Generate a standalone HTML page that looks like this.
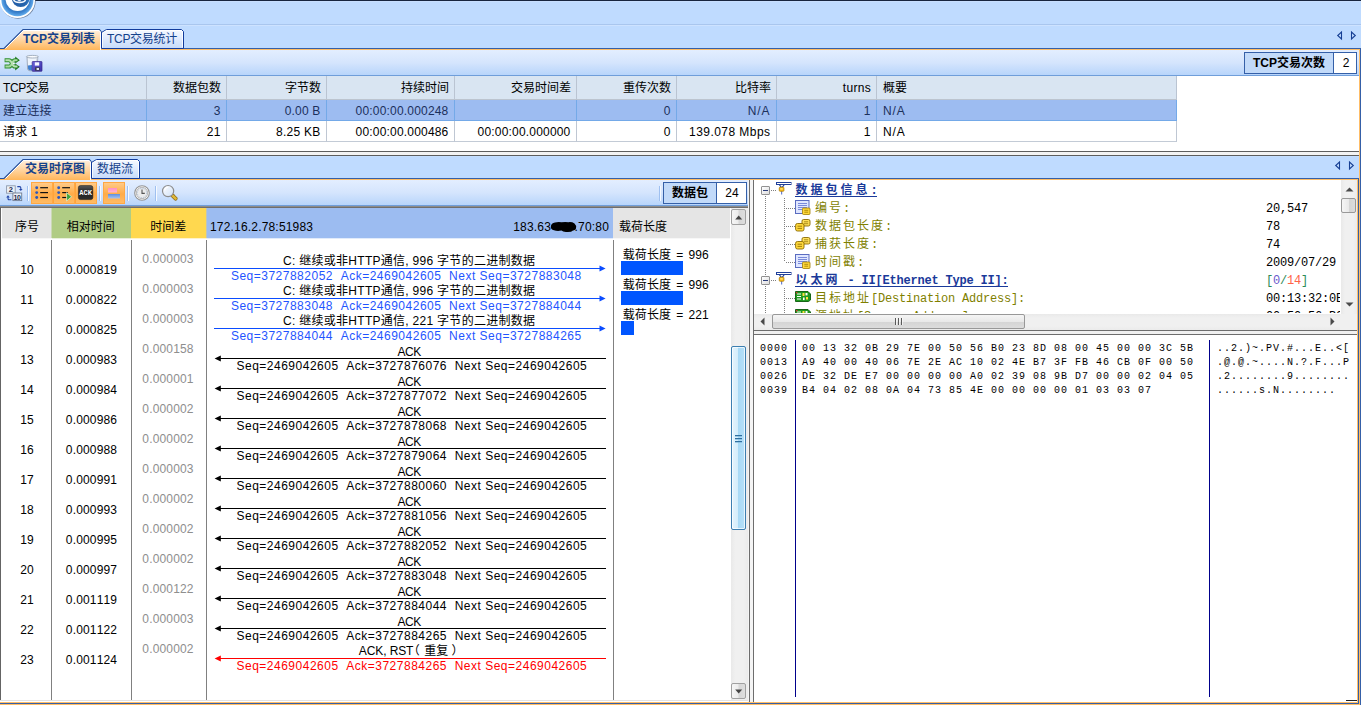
<!DOCTYPE html>
<html lang="zh-CN"><head><meta charset="utf-8"><title>TCP交易列表</title>
<style>
*{box-sizing:border-box;margin:0;padding:0}
html,body{width:1361px;height:705px;overflow:hidden}
body{background:#bfdbff;font-family:"Liberation Sans","Noto Sans CJK SC",sans-serif;font-size:12px;color:#000;position:relative;line-height:16px;font-kerning:none}
.a{position:absolute}
.t{position:absolute;white-space:pre;line-height:16px;height:16px}
.mono{font-family:"Liberation Mono","Noto Sans CJK SC",monospace;font-size:12px;letter-spacing:-0.2px}
.cj{letter-spacing:2px}
.cjb{letter-spacing:3px}
.hex{font-family:"Liberation Mono",monospace;font-size:10px;letter-spacing:1px}
.r{text-align:right}
.c{text-align:center}
svg{position:absolute;overflow:visible}
</style></head>
<body>
<div class="a" style="left:0px;top:0px;width:1361px;height:1px;background:#17253f;"></div>
<div class="a" style="left:0px;top:1px;width:1361px;height:1px;background:#c8dfff;"></div>
<div class="a" style="left:0px;top:24px;width:1361px;height:1px;background:#a9c6ee;"></div>
<div class="a" style="left:0px;top:25px;width:1361px;height:1px;background:#cde2ff;"></div>
<svg style="left:0;top:0" width="40" height="22" viewBox="0 0 40 22">
<defs>
<radialGradient id="lg1" gradientUnits="userSpaceOnUse" cx="17.4" cy="0" r="16"><stop offset="0" stop-color="#1f58a2"/><stop offset="0.55" stop-color="#2565ad"/><stop offset="0.8" stop-color="#3b83cf"/><stop offset="1" stop-color="#62abea"/></radialGradient>
</defs>
<circle cx="18" cy="1" r="17.7" fill="#566784" opacity="0.75"/>
<circle cx="17.4" cy="0.5" r="17.6" fill="#fff"/>
<circle cx="17.4" cy="0.2" r="16" fill="url(#lg1)"/>
<circle cx="17.6" cy="-1" r="12.1" fill="#fff"/>
<circle cx="20.7" cy="-1.9" r="8.9" fill="url(#lg1)"/>
<ellipse cx="19.6" cy="-0.6" rx="6.7" ry="3.9" fill="#f4f8fd"/>
<ellipse cx="19.6" cy="-1" rx="5.2" ry="2.6" fill="#2560a8"/>
<ellipse cx="19.3" cy="-0.2" rx="1.9" ry="1.1" fill="#f4f8fd"/>
</svg>
<div class="a" style="left:101px;top:48px;width:1260px;height:1px;background:#3560a8;"></div>
<div class="a" style="left:0px;top:49px;width:1360px;height:1px;background:#ffbd66;"></div>
<svg style="left:0;top:29px" width="187" height="21" viewBox="0 0 187 21">
<defs>
<linearGradient id="ta29" x1="0" y1="0" x2="0" y2="1"><stop offset="0" stop-color="#fff"/><stop offset="0.1" stop-color="#ffecd6"/><stop offset="0.5" stop-color="#ffd5a2"/><stop offset="1" stop-color="#ffb65a"/></linearGradient>
<linearGradient id="tb29" x1="0" y1="0" x2="0" y2="1"><stop offset="0" stop-color="#f6f9ff"/><stop offset="0.5" stop-color="#dfeafd"/><stop offset="1" stop-color="#c6dbfb"/></linearGradient>
</defs>
<path d="M101.5,19.5 V3.5 L106.5,0.5 H181.5 L183.5,2.5 V19.5 Z" fill="url(#tb29)" stroke="#123c9c" stroke-width="1"/>
<path d="M102.5,18.5 V4 L106.8,1.5 H181.2 L182.5,3 V18.5" fill="none" stroke="#fff" stroke-width="1" opacity="0.85"/>
<path d="M0,19.5 L4,19.5 L23,0.5 H99.5 L101.5,2.5 V21 H0 Z" fill="url(#ta29)"/>
<path d="M0,19.5 L4,19.5 L23,0.5 H99.5 L101.5,3" fill="none" stroke="#24509f" stroke-width="1.15"/>
<path d="M5.5,19.5 L23.5,1.5 H99 L100.5,3.2 V21" fill="none" stroke="#fff" stroke-width="1"/>
<path d="M101.5,3 V19.5" fill="none" stroke="#123c9c" stroke-width="1"/>
</svg>
<div class="t " style="left:23px;top:31px;font-weight:bold;color:#15428b">TCP交易列表</div>
<div class="t " style="left:107px;top:31px;color:#15428b;letter-spacing:-0.3px">TCP交易统计</div>
<svg style="left:1335px;top:31px" width="22" height="9" viewBox="0 0 22 9">
<path d="M6.5,1 V8 L2.7,4.5 Z" fill="none" stroke="#163f94" stroke-width="1.1" stroke-linejoin="miter"/>
<path d="M16.5,1 V8 L20.3,4.5 Z" fill="none" stroke="#163f94" stroke-width="1.1" stroke-linejoin="miter"/>
</svg>
<div class="a" style="left:1359px;top:49px;width:1px;height:656px;background:#ffbd66;"></div>
<div class="a" style="left:1360px;top:48px;width:1px;height:657px;background:#3560a8;"></div>
<div class="a" style="left:0px;top:50px;width:1359px;height:26px;background:linear-gradient(#e3eeff 0%,#d5e5fd 50%,#b8d5fb 100%);border-bottom:1px solid #6f9eda"></div>
<div class="a" style="left:1244px;top:52px;width:90px;height:22px;background:#c2daf9;border:1px solid #3560a8"></div>
<div class="a" style="left:1333px;top:52px;width:24px;height:22px;background:#fff;border:1px solid #3560a8"></div>
<div class="t c" style="left:1244px;top:55px;width:90px;font-weight:bold">TCP交易次数</div>
<div class="t c" style="left:1334px;top:55px;width:24px;">2</div>
<div class="a" style="left:0px;top:76px;width:1359px;height:75px;background:#fff;"></div>
<div class="a" style="left:0px;top:76px;width:1177px;height:23px;background:#d9e5f2;"></div>
<div class="a" style="left:0px;top:99px;width:1177px;height:1px;background:#bcc4cf;"></div>
<div class="a" style="left:0px;top:100px;width:1177px;height:20px;background:#9dbcf1;"></div>
<div class="a" style="left:0px;top:120px;width:1177px;height:1px;background:#74a9e8;"></div>
<div class="a" style="left:0px;top:141px;width:1177px;height:1px;background:#c3cbd6;"></div>
<div class="a" style="left:146px;top:76px;width:1px;height:23px;background:#bac4d2;"></div>
<div class="a" style="left:146px;top:100px;width:1px;height:21px;background:#74a9e8;"></div>
<div class="a" style="left:146px;top:121px;width:1px;height:21px;background:#bfc7d3;"></div>
<div class="a" style="left:226px;top:76px;width:1px;height:23px;background:#bac4d2;"></div>
<div class="a" style="left:226px;top:100px;width:1px;height:21px;background:#74a9e8;"></div>
<div class="a" style="left:226px;top:121px;width:1px;height:21px;background:#bfc7d3;"></div>
<div class="a" style="left:326px;top:76px;width:1px;height:23px;background:#bac4d2;"></div>
<div class="a" style="left:326px;top:100px;width:1px;height:21px;background:#74a9e8;"></div>
<div class="a" style="left:326px;top:121px;width:1px;height:21px;background:#bfc7d3;"></div>
<div class="a" style="left:454px;top:76px;width:1px;height:23px;background:#bac4d2;"></div>
<div class="a" style="left:454px;top:100px;width:1px;height:21px;background:#74a9e8;"></div>
<div class="a" style="left:454px;top:121px;width:1px;height:21px;background:#bfc7d3;"></div>
<div class="a" style="left:576px;top:76px;width:1px;height:23px;background:#bac4d2;"></div>
<div class="a" style="left:576px;top:100px;width:1px;height:21px;background:#74a9e8;"></div>
<div class="a" style="left:576px;top:121px;width:1px;height:21px;background:#bfc7d3;"></div>
<div class="a" style="left:676px;top:76px;width:1px;height:23px;background:#bac4d2;"></div>
<div class="a" style="left:676px;top:100px;width:1px;height:21px;background:#74a9e8;"></div>
<div class="a" style="left:676px;top:121px;width:1px;height:21px;background:#bfc7d3;"></div>
<div class="a" style="left:776px;top:76px;width:1px;height:23px;background:#bac4d2;"></div>
<div class="a" style="left:776px;top:100px;width:1px;height:21px;background:#74a9e8;"></div>
<div class="a" style="left:776px;top:121px;width:1px;height:21px;background:#bfc7d3;"></div>
<div class="a" style="left:876px;top:76px;width:1px;height:23px;background:#bac4d2;"></div>
<div class="a" style="left:876px;top:100px;width:1px;height:21px;background:#74a9e8;"></div>
<div class="a" style="left:876px;top:121px;width:1px;height:21px;background:#bfc7d3;"></div>
<div class="a" style="left:1176px;top:76px;width:1px;height:23px;background:#bac4d2;"></div>
<div class="a" style="left:1176px;top:100px;width:1px;height:21px;background:#74a9e8;"></div>
<div class="a" style="left:1176px;top:121px;width:1px;height:21px;background:#bfc7d3;"></div>
<div class="t " style="left:3px;top:80px;letter-spacing:-0.4px">TCP交易</div>
<div class="t " style="left:3px;top:103px;letter-spacing:0.19px;color:#1c305c;">建立连接</div>
<div class="t " style="left:3px;top:124px;letter-spacing:0.19px;">请求 1</div>
<div class="t r" style="left:147px;top:80px;width:74px;">数据包数</div>
<div class="t r" style="left:147px;top:103px;width:73.5px;letter-spacing:0.19px;color:#1c305c;">3</div>
<div class="t r" style="left:147px;top:124px;width:73.5px;letter-spacing:0.19px;">21</div>
<div class="t r" style="left:227px;top:80px;width:94px;">字节数</div>
<div class="t r" style="left:227px;top:103px;width:93.5px;letter-spacing:0.19px;color:#1c305c;">0.00 B</div>
<div class="t r" style="left:227px;top:124px;width:93.5px;letter-spacing:0.25px;">8.25 KB</div>
<div class="t r" style="left:327px;top:80px;width:122px;">持续时间</div>
<div class="t r" style="left:327px;top:103px;width:121.5px;letter-spacing:0.19px;color:#1c305c;">00:00:00.000248</div>
<div class="t r" style="left:327px;top:124px;width:121.5px;letter-spacing:0.19px;">00:00:00.000486</div>
<div class="t r" style="left:455px;top:80px;width:116px;">交易时间差</div>
<div class="t r" style="left:455px;top:103px;width:115.5px;letter-spacing:0.19px;color:#1c305c;"></div>
<div class="t r" style="left:455px;top:124px;width:115.5px;letter-spacing:0.19px;">00:00:00.000000</div>
<div class="t r" style="left:577px;top:80px;width:94px;">重传次数</div>
<div class="t r" style="left:577px;top:103px;width:93.5px;letter-spacing:0.19px;color:#1c305c;">0</div>
<div class="t r" style="left:577px;top:124px;width:93.5px;letter-spacing:0.19px;">0</div>
<div class="t r" style="left:677px;top:80px;width:94px;">比特率</div>
<div class="t r" style="left:677px;top:103px;width:93.5px;letter-spacing:0.9px;color:#1c305c;">N/A</div>
<div class="t r" style="left:677px;top:124px;width:93.5px;letter-spacing:0.45px;">139.078 Mbps</div>
<div class="t r" style="left:777px;top:80px;width:94px;letter-spacing:0.3px">turns</div>
<div class="t r" style="left:777px;top:103px;width:93.5px;letter-spacing:0.19px;color:#1c305c;">1</div>
<div class="t r" style="left:777px;top:124px;width:93.5px;letter-spacing:0.19px;">1</div>
<div class="t " style="left:883px;top:80px;">概要</div>
<div class="t " style="left:883px;top:103px;letter-spacing:0.9px;color:#1c305c;">N/A</div>
<div class="t " style="left:883px;top:124px;letter-spacing:0.9px;">N/A</div>
<div class="a" style="left:0px;top:151px;width:1359px;height:1px;background:#5e5e5e;"></div>
<div class="a" style="left:0px;top:152px;width:1359px;height:3px;background:#f3f3f3;"></div>
<div class="a" style="left:0px;top:155px;width:1359px;height:1px;background:#5e5e5e;"></div>
<div class="a" style="left:0px;top:156px;width:1359px;height:1px;background:#c5dfff;"></div>
<div class="a" style="left:91px;top:178px;width:1268px;height:1px;background:#3560a8;"></div>
<div class="a" style="left:0px;top:179px;width:1358px;height:1px;background:#ffbd66;"></div>
<svg style="left:0;top:159px" width="143" height="21" viewBox="0 0 143 21">
<defs>
<linearGradient id="ta159" x1="0" y1="0" x2="0" y2="1"><stop offset="0" stop-color="#fff"/><stop offset="0.1" stop-color="#ffecd6"/><stop offset="0.5" stop-color="#ffd5a2"/><stop offset="1" stop-color="#ffb65a"/></linearGradient>
<linearGradient id="tb159" x1="0" y1="0" x2="0" y2="1"><stop offset="0" stop-color="#f6f9ff"/><stop offset="0.5" stop-color="#dfeafd"/><stop offset="1" stop-color="#c6dbfb"/></linearGradient>
</defs>
<path d="M91.5,19.5 V3.5 L96.5,0.5 H137.5 L139.5,2.5 V19.5 Z" fill="url(#tb159)" stroke="#123c9c" stroke-width="1"/>
<path d="M92.5,18.5 V4 L96.8,1.5 H137.2 L138.5,3 V18.5" fill="none" stroke="#fff" stroke-width="1" opacity="0.85"/>
<path d="M0,19.5 L4,19.5 L23,0.5 H89.5 L91.5,2.5 V21 H0 Z" fill="url(#ta159)"/>
<path d="M0,19.5 L4,19.5 L23,0.5 H89.5 L91.5,3" fill="none" stroke="#24509f" stroke-width="1.15"/>
<path d="M5.5,19.5 L23.5,1.5 H89 L90.5,3.2 V21" fill="none" stroke="#fff" stroke-width="1"/>
<path d="M91.5,3 V19.5" fill="none" stroke="#123c9c" stroke-width="1"/>
</svg>
<div class="t " style="left:25px;top:161px;font-weight:bold;color:#15428b">交易时序图</div>
<div class="t " style="left:97px;top:161px;color:#15428b">数据流</div>
<svg style="left:1333px;top:161px" width="22" height="9" viewBox="0 0 22 9">
<path d="M6.5,1 V8 L2.7,4.5 Z" fill="none" stroke="#163f94" stroke-width="1.1" stroke-linejoin="miter"/>
<path d="M16.5,1 V8 L20.3,4.5 Z" fill="none" stroke="#163f94" stroke-width="1.1" stroke-linejoin="miter"/>
</svg>
<div class="a" style="left:1357px;top:179px;width:1px;height:524px;background:#ffbd66;"></div>
<div class="a" style="left:1358px;top:178px;width:1px;height:526px;background:#3560a8;"></div>
<div class="a" style="left:0px;top:702px;width:1358px;height:1px;background:#ffbd66;"></div>
<div class="a" style="left:0px;top:703px;width:1359px;height:1px;background:#3560a8;"></div>
<div class="a" style="left:0px;top:704px;width:1360px;height:1px;background:#ffbd66;"></div>
<div class="a" style="left:0px;top:180px;width:749px;height:26px;background:linear-gradient(#e3eeff 0%,#d5e5fd 50%,#b8d5fb 100%);border-bottom:1px solid #6f9eda"></div>
<svg style="left:3.5px;top:55.5px" width="17" height="15" viewBox="0 0 17 15">
<defs><linearGradient id="sg" x1="0" y1="0" x2="0" y2="1"><stop offset="0" stop-color="#cdeac6"/><stop offset="1" stop-color="#8fcf86"/></linearGradient></defs>
<g fill="none" stroke="#2f8f2f" stroke-width="4" stroke-linejoin="round"><path d="M0.6,4.3 H5 C8.5,4.3 7.5,10.6 11,10.6 H12"/><path d="M0.6,10.6 H5 C8.5,10.6 7.5,4.3 11,4.3 H12"/></g>
<path d="M11.2,0.4 L15.8,4.2 L11.2,7.6 Z M11.2,7.4 L15.8,10.8 L11.2,14.6 Z" fill="#1f7a1f"/>
<g fill="none" stroke="url(#sg)" stroke-width="2" stroke-linejoin="round"><path d="M1.4,10.6 H5 C8.5,10.6 7.5,4.3 11,4.3 H13.5" stroke="#a9dba2"/><path d="M1.4,4.3 H5 C8.5,4.3 7.5,10.6 11,10.6 H13.5" stroke="#b9e2b2"/></g>
<rect x="9" y="6.6" width="1.6" height="1.6" fill="#eef6ff"/>
</svg>
<svg style="left:26px;top:54.5px" width="17" height="17" viewBox="0 0 17 17">
<defs><linearGradient id="fl" x1="0" y1="0" x2="1" y2="1"><stop offset="0" stop-color="#6a62dc"/><stop offset="1" stop-color="#3a2fa6"/></linearGradient></defs>
<path d="M1,1.6 L1.6,14 Q1.8,15.6 4,15.8 L9,15.8 Q11,15.6 11.2,14 L11.8,1.6 Z" fill="#f3f7fc" fill-opacity="0.85" stroke="#98a4b4" stroke-width="0.9"/>
<ellipse cx="6.4" cy="1.7" rx="6" ry="1.3" fill="#fbfcfe" stroke="#9ca8b8" stroke-width="0.9"/>
<path d="M1.9,10.4 L6,10 L6,15.4 L3.6,15.3 Q2.2,15 2.1,14 Z" fill="#3f7fd0"/>
<path d="M7.5,3 L10.8,3 L10.6,6" fill="none" stroke="#cfd6e0" stroke-width="1"/>
<rect x="6.2" y="6.5" width="9.8" height="9.8" rx="0.6" fill="url(#fl)" stroke="#3a2a8c" stroke-width="0.7"/>
<rect x="8.8" y="7.3" width="4.4" height="3.3" fill="#f6f7ff"/>
<rect x="9" y="12.4" width="4.8" height="3.2" fill="#3a3a4a"/>
<rect x="10.6" y="13" width="2.4" height="2" fill="#dfe2ee"/>
</svg>
<div class="a" style="left:31px;top:182px;width:22px;height:22px;background:linear-gradient(#ffca88 0%,#ffb75e 35%,#ffac48 55%,#ffbb66 100%);border:1px solid #ffa844"></div>
<div class="a" style="left:53px;top:182px;width:22px;height:22px;background:linear-gradient(#ffca88 0%,#ffb75e 35%,#ffac48 55%,#ffbb66 100%);border:1px solid #ffa844"></div>
<div class="a" style="left:75px;top:182px;width:22px;height:22px;background:linear-gradient(#ffca88 0%,#ffb75e 35%,#ffac48 55%,#ffbb66 100%);border:1px solid #ffa844"></div>
<div class="a" style="left:103px;top:182px;width:22px;height:22px;background:linear-gradient(#ffca88 0%,#ffb75e 35%,#ffac48 55%,#ffbb66 100%);border:1px solid #ffa844"></div>
<div class="a" style="left:52.5px;top:183px;width:1px;height:20px;background:#ffa43a;"></div>
<div class="a" style="left:74.5px;top:183px;width:1px;height:20px;background:#ffa43a;"></div>
<div class="a" style="left:27px;top:186px;width:1px;height:15px;background:#9fc0f0;"></div>
<div class="a" style="left:28px;top:186px;width:1px;height:15px;background:#f6faff;"></div>
<div class="a" style="left:99px;top:186px;width:1px;height:15px;background:#9fc0f0;"></div>
<div class="a" style="left:100px;top:186px;width:1px;height:15px;background:#f6faff;"></div>
<div class="a" style="left:127px;top:186px;width:1px;height:15px;background:#9fc0f0;"></div>
<div class="a" style="left:128px;top:186px;width:1px;height:15px;background:#f6faff;"></div>
<div class="a" style="left:155px;top:186px;width:1px;height:15px;background:#9fc0f0;"></div>
<div class="a" style="left:156px;top:186px;width:1px;height:15px;background:#f6faff;"></div>
<svg style="left:6px;top:185px" width="17" height="17" viewBox="0 0 17 17">
<rect x="0.6" y="0.8" width="8.6" height="7.4" fill="#eef2f8" stroke="#8a97ab" stroke-width="0.9"/>
<rect x="6.9" y="8" width="8.8" height="7.6" fill="#eef2f8" stroke="#6f7c92" stroke-width="0.9"/>
<text x="2.7" y="7.2" font-family="Liberation Sans,sans-serif" font-size="7.5" font-weight="bold" fill="#1a2a50">2</text>
<text x="7.6" y="14.7" font-family="Liberation Sans,sans-serif" font-size="7" font-weight="bold" fill="#1a2a50" letter-spacing="-0.4">10</text>
<path d="M11.3,1.6 H13.6 Q14.8,1.6 14.8,2.8 V4.6" fill="none" stroke="#2447a8" stroke-width="1.1"/>
<path d="M13,3.9 L14.8,6 L16.6,3.9 Z" fill="#2447a8"/>
<path d="M5.4,14.8 H3.2 Q2,14.8 2,13.6 V11.8" fill="none" stroke="#2447a8" stroke-width="1.1"/>
<path d="M0.2,12.4 L2,10.3 L3.8,12.4 Z" fill="#2447a8"/>
</svg>
<svg style="left:34px;top:185px" width="18" height="17" viewBox="0 0 18 17"><circle cx="2.7" cy="2.7" r="1.45" fill="#2c58bd"/><rect x="6.2" y="2.1" width="7.8" height="1.2" fill="#111"/><circle cx="2.7" cy="7.6" r="1.45" fill="#2c58bd"/><rect x="6.2" y="7.0" width="7.8" height="1.2" fill="#111"/><circle cx="2.7" cy="12.5" r="1.45" fill="#2c58bd"/><rect x="6.2" y="11.9" width="7.8" height="1.2" fill="#111"/></svg>
<svg style="left:55.8px;top:185px" width="18" height="17" viewBox="0 0 18 17"><circle cx="2.7" cy="2.7" r="1.45" fill="#2c58bd"/><rect x="6.2" y="2.1" width="7.8" height="1.2" fill="#111"/><circle cx="2.7" cy="7.6" r="1.45" fill="#2c58bd"/><rect x="6.2" y="7.0" width="5.6" height="1.2" fill="#111"/><circle cx="2.7" cy="12.5" r="1.45" fill="#2c58bd"/><rect x="6.2" y="11.9" width="4.4" height="1.2" fill="#111"/><path d="M10.6,7.6 L15.6,11.8 L10.6,16 Z" fill="#3fa33a" stroke="#eaf6e4" stroke-width="0.7"/></svg>
<svg style="left:78px;top:185px" width="16" height="16" viewBox="0 0 16 16">
<defs><linearGradient id="ack" x1="0" y1="0" x2="0" y2="1"><stop offset="0" stop-color="#5a5a5a"/><stop offset="0.45" stop-color="#222"/><stop offset="1" stop-color="#2e2e2e"/></linearGradient></defs>
<rect x="0.4" y="0.6" width="14.4" height="14" rx="2" fill="url(#ack)" stroke="#111" stroke-width="0.5"/>
<text x="7.6" y="10.2" text-anchor="middle" font-family="Liberation Mono,monospace" font-size="7" font-weight="bold" fill="#fff" letter-spacing="0">ACK</text>
</svg>
<svg style="left:107px;top:187px" width="14" height="13" viewBox="0 0 14 13">
<defs><linearGradient id="pk" x1="0" y1="0" x2="0" y2="1"><stop offset="0" stop-color="#ff8fc0"/><stop offset="1" stop-color="#ffb4d2"/></linearGradient>
<linearGradient id="bl" x1="0" y1="0" x2="0" y2="1"><stop offset="0" stop-color="#5f8fe0"/><stop offset="1" stop-color="#a8c4f0"/></linearGradient></defs>
<rect x="1" y="1" width="9" height="4.5" fill="url(#pk)"/>
<rect x="1" y="7" width="12" height="4.5" fill="url(#bl)"/>
</svg>
<svg style="left:133.5px;top:184.5px" width="16" height="16" viewBox="0 0 16 16">
<circle cx="8" cy="8" r="7.3" fill="#fff" stroke="#939393" stroke-width="1.1"/>
<circle cx="8" cy="8" r="5.7" fill="#ececec" stroke="#a8a8a8" stroke-width="0.8"/>
<circle cx="8" cy="8" r="4.6" fill="none" stroke="#8fa8cc" stroke-width="0.6" stroke-dasharray="1.2 1.2"/>
<path d="M8,4.6 V8.4 H10.8" fill="none" stroke="#555" stroke-width="1.1"/>
</svg>
<svg style="left:161px;top:184px" width="18" height="18" viewBox="0 0 18 18">
<defs><linearGradient id="mg" x1="0" y1="0" x2="1" y2="1"><stop offset="0" stop-color="#fff"/><stop offset="1" stop-color="#cfe0f6"/></linearGradient></defs>
<path d="M11.6,11.6 L14.6,14.6" stroke="#8a6a14" stroke-width="4" stroke-linecap="round"/>
<path d="M11.6,11.6 L14.6,14.6" stroke="#e0b83a" stroke-width="2.6" stroke-linecap="round"/>
<circle cx="7.1" cy="7.1" r="5.6" fill="url(#mg)" stroke="#8d8d8d" stroke-width="1.2"/>
<path d="M3.6,6.4 A3.8,3.8 0 0 1 7,3.3" fill="none" stroke="#fff" stroke-width="1.1"/>
</svg>
<div class="a" style="left:659px;top:186px;width:1px;height:15px;background:#9fc0f0;"></div>
<div class="a" style="left:660px;top:186px;width:1px;height:15px;background:#f6faff;"></div>
<div class="a" style="left:663px;top:182px;width:54px;height:22px;background:#c2daf9;border:1px solid #3560a8"></div>
<div class="a" style="left:716px;top:182px;width:31px;height:22px;background:#fff;border:1px solid #3560a8"></div>
<div class="t c" style="left:663px;top:185px;width:54px;font-weight:bold">数据包</div>
<div class="t c" style="left:716.6px;top:185px;width:31px;letter-spacing:0.2px">24</div>
<div class="a" style="left:0px;top:206px;width:749px;height:1px;background:#8c8c8c;"></div>
<div class="a" style="left:0px;top:207px;width:749px;height:1px;background:#6e6e6e;"></div>
<div class="a" style="left:0px;top:208px;width:749px;height:494px;background:#fff;"></div>
<div class="a" style="left:0px;top:207px;width:1px;height:493px;background:#646464;"></div>
<div class="a" style="left:0px;top:700px;width:748px;height:1px;background:#e3e3e3;"></div>
<div class="a" style="left:2px;top:208px;width:50px;height:30px;background:#e6e6e6;"></div>
<div class="a" style="left:52px;top:208px;width:79px;height:30px;background:#b1cc84;"></div>
<div class="a" style="left:131px;top:208px;width:76px;height:30px;background:#ffd850;"></div>
<div class="a" style="left:207px;top:208px;width:406px;height:30px;background:#9dbcf1;"></div>
<div class="a" style="left:613px;top:208px;width:117px;height:30px;background:#e6e6e6;"></div>
<div class="a" style="left:2px;top:208px;width:50px;height:31px;background:#e6e6e6;opacity:0.3"></div>
<div class="a" style="left:52px;top:208px;width:79px;height:31px;background:#b1cc84;opacity:0.3"></div>
<div class="a" style="left:131px;top:208px;width:76px;height:31px;background:#ffd850;opacity:0.3"></div>
<div class="a" style="left:207px;top:208px;width:406px;height:31px;background:#9dbcf1;opacity:0.3"></div>
<div class="a" style="left:613px;top:208px;width:117px;height:31px;background:#e6e6e6;opacity:0.3"></div>
<div class="a" style="left:51px;top:208px;width:1px;height:30px;background:#cbd9b5;"></div>
<div class="a" style="left:206px;top:208px;width:1px;height:30px;background:#bfc6b9;"></div>
<div class="t c" style="left:2px;top:219px;width:50px;">序号</div>
<div class="t c" style="left:51.3px;top:219px;width:79px;">相对时间</div>
<div class="t c" style="left:130.3px;top:219px;width:76px;">时间差</div>
<div class="t " style="left:210px;top:219px;letter-spacing:0.18px">172.16.2.78:51983</div>
<div class="t r" style="left:488px;top:219px;width:121px;letter-spacing:0.18px">183.63<span style="display:inline-block;width:23.5px"></span>.70:80</div>
<svg style="left:549px;top:220px" width="30" height="14" viewBox="0 0 30 14"><path d="M1.8,6.5 Q2.2,3.2 6,2.6 Q9,1.6 12.5,2.3 Q16,1.6 19.5,2.2 Q23,1.8 25.5,3.4 Q27.6,5 27,8.6 Q26.5,10.6 24,10.4 Q22.5,12.2 18,12 Q14,12.3 12.5,10.6 Q8,11.3 5,10.3 Q1.6,9.5 1.8,6.5 Z" fill="#000"/></svg>
<div class="t " style="left:619px;top:219px;">载荷长度</div>
<div class="a" style="left:51px;top:240px;width:1px;height:460px;background:#808080;"></div>
<div class="a" style="left:131px;top:240px;width:1px;height:460px;background:#808080;"></div>
<div class="a" style="left:206px;top:240px;width:1px;height:460px;background:#808080;"></div>
<div class="a" style="left:613px;top:240px;width:1px;height:460px;background:#808080;"></div>
<div class="t c" style="left:2px;top:262px;width:50px;letter-spacing:0.2px">10</div>
<div class="t c" style="left:52px;top:262px;width:79px;letter-spacing:0.15px">0.000819</div>
<div class="t c" style="left:130px;top:251px;width:76px;color:#8e8e8e;letter-spacing:0.15px">0.000003</div>
<div class="a" style="left:214px;top:268px;width:387px;height:1px;background:#0a4cff;"></div>
<svg style="left:599px;top:265px" width="7" height="7" viewBox="0 0 7 7"><path d="M0.5,0.4 L6.6,3.5 L0.5,6.6 Z" fill="#0a4cff"/></svg>
<div class="t c" style="left:209.2px;top:253px;width:400px;letter-spacing:0.28px">C: 继续或非HTTP通信, 996 字节的二进制数据</div>
<div class="t c" style="left:206.3px;top:268px;width:400px;color:#1f55ff;letter-spacing:0.5px">Seq=3727882052  Ack=2469042605  Next Seq=3727883048</div>
<div class="t " style="left:622.7px;top:247px;letter-spacing:0.12px;word-spacing:1.6px">载荷长度 = 996</div>
<div class="a" style="left:621px;top:261px;width:62px;height:14px;background:#0055ff;"></div>
<div class="t c" style="left:2px;top:292px;width:50px;letter-spacing:0.2px">11</div>
<div class="t c" style="left:52px;top:292px;width:79px;letter-spacing:0.15px">0.000822</div>
<div class="t c" style="left:130px;top:281px;width:76px;color:#8e8e8e;letter-spacing:0.15px">0.000003</div>
<div class="a" style="left:214px;top:298px;width:387px;height:1px;background:#0a4cff;"></div>
<svg style="left:599px;top:295px" width="7" height="7" viewBox="0 0 7 7"><path d="M0.5,0.4 L6.6,3.5 L0.5,6.6 Z" fill="#0a4cff"/></svg>
<div class="t c" style="left:209.2px;top:283px;width:400px;letter-spacing:0.28px">C: 继续或非HTTP通信, 996 字节的二进制数据</div>
<div class="t c" style="left:206.3px;top:298px;width:400px;color:#1f55ff;letter-spacing:0.5px">Seq=3727883048  Ack=2469042605  Next Seq=3727884044</div>
<div class="t " style="left:622.7px;top:277px;letter-spacing:0.12px;word-spacing:1.6px">载荷长度 = 996</div>
<div class="a" style="left:621px;top:291px;width:62px;height:14px;background:#0055ff;"></div>
<div class="t c" style="left:2px;top:322px;width:50px;letter-spacing:0.2px">12</div>
<div class="t c" style="left:52px;top:322px;width:79px;letter-spacing:0.15px">0.000825</div>
<div class="t c" style="left:130px;top:311px;width:76px;color:#8e8e8e;letter-spacing:0.15px">0.000003</div>
<div class="a" style="left:214px;top:328px;width:387px;height:1px;background:#0a4cff;"></div>
<svg style="left:599px;top:325px" width="7" height="7" viewBox="0 0 7 7"><path d="M0.5,0.4 L6.6,3.5 L0.5,6.6 Z" fill="#0a4cff"/></svg>
<div class="t c" style="left:209.2px;top:313px;width:400px;letter-spacing:0.28px">C: 继续或非HTTP通信, 221 字节的二进制数据</div>
<div class="t c" style="left:206.3px;top:328px;width:400px;color:#1f55ff;letter-spacing:0.5px">Seq=3727884044  Ack=2469042605  Next Seq=3727884265</div>
<div class="t " style="left:622.7px;top:307px;letter-spacing:0.12px;word-spacing:1.6px">载荷长度 = 221</div>
<div class="a" style="left:621px;top:321px;width:13px;height:14px;background:#0055ff;"></div>
<div class="t c" style="left:2px;top:352px;width:50px;letter-spacing:0.2px">13</div>
<div class="t c" style="left:52px;top:352px;width:79px;letter-spacing:0.15px">0.000983</div>
<div class="t c" style="left:130px;top:341px;width:76px;color:#8e8e8e;letter-spacing:0.15px">0.000158</div>
<div class="a" style="left:220px;top:358px;width:386px;height:1px;background:#000;"></div>
<svg style="left:214px;top:355px" width="7" height="7" viewBox="0 0 7 7"><path d="M6.8,0.4 L0.6,3.5 L6.8,6.6 Z" fill="#000"/></svg>
<div class="t c" style="left:209.10000000000002px;top:344px;width:400px;letter-spacing:-0.5px">ACK</div>
<div class="t c" style="left:211.89999999999998px;top:358px;width:400px;color:#000;letter-spacing:0.5px">Seq=2469042605  Ack=3727876076  Next Seq=2469042605</div>
<div class="t c" style="left:2px;top:382px;width:50px;letter-spacing:0.2px">14</div>
<div class="t c" style="left:52px;top:382px;width:79px;letter-spacing:0.15px">0.000984</div>
<div class="t c" style="left:130px;top:371px;width:76px;color:#8e8e8e;letter-spacing:0.15px">0.000001</div>
<div class="a" style="left:220px;top:388px;width:386px;height:1px;background:#000;"></div>
<svg style="left:214px;top:385px" width="7" height="7" viewBox="0 0 7 7"><path d="M6.8,0.4 L0.6,3.5 L6.8,6.6 Z" fill="#000"/></svg>
<div class="t c" style="left:209.10000000000002px;top:374px;width:400px;letter-spacing:-0.5px">ACK</div>
<div class="t c" style="left:211.89999999999998px;top:388px;width:400px;color:#000;letter-spacing:0.5px">Seq=2469042605  Ack=3727877072  Next Seq=2469042605</div>
<div class="t c" style="left:2px;top:412px;width:50px;letter-spacing:0.2px">15</div>
<div class="t c" style="left:52px;top:412px;width:79px;letter-spacing:0.15px">0.000986</div>
<div class="t c" style="left:130px;top:401px;width:76px;color:#8e8e8e;letter-spacing:0.15px">0.000002</div>
<div class="a" style="left:220px;top:418px;width:386px;height:1px;background:#000;"></div>
<svg style="left:214px;top:415px" width="7" height="7" viewBox="0 0 7 7"><path d="M6.8,0.4 L0.6,3.5 L6.8,6.6 Z" fill="#000"/></svg>
<div class="t c" style="left:209.10000000000002px;top:404px;width:400px;letter-spacing:-0.5px">ACK</div>
<div class="t c" style="left:211.89999999999998px;top:418px;width:400px;color:#000;letter-spacing:0.5px">Seq=2469042605  Ack=3727878068  Next Seq=2469042605</div>
<div class="t c" style="left:2px;top:442px;width:50px;letter-spacing:0.2px">16</div>
<div class="t c" style="left:52px;top:442px;width:79px;letter-spacing:0.15px">0.000988</div>
<div class="t c" style="left:130px;top:431px;width:76px;color:#8e8e8e;letter-spacing:0.15px">0.000002</div>
<div class="a" style="left:220px;top:448px;width:386px;height:1px;background:#000;"></div>
<svg style="left:214px;top:445px" width="7" height="7" viewBox="0 0 7 7"><path d="M6.8,0.4 L0.6,3.5 L6.8,6.6 Z" fill="#000"/></svg>
<div class="t c" style="left:209.10000000000002px;top:434px;width:400px;letter-spacing:-0.5px">ACK</div>
<div class="t c" style="left:211.89999999999998px;top:448px;width:400px;color:#000;letter-spacing:0.5px">Seq=2469042605  Ack=3727879064  Next Seq=2469042605</div>
<div class="t c" style="left:2px;top:472px;width:50px;letter-spacing:0.2px">17</div>
<div class="t c" style="left:52px;top:472px;width:79px;letter-spacing:0.15px">0.000991</div>
<div class="t c" style="left:130px;top:461px;width:76px;color:#8e8e8e;letter-spacing:0.15px">0.000003</div>
<div class="a" style="left:220px;top:478px;width:386px;height:1px;background:#000;"></div>
<svg style="left:214px;top:475px" width="7" height="7" viewBox="0 0 7 7"><path d="M6.8,0.4 L0.6,3.5 L6.8,6.6 Z" fill="#000"/></svg>
<div class="t c" style="left:209.10000000000002px;top:464px;width:400px;letter-spacing:-0.5px">ACK</div>
<div class="t c" style="left:211.89999999999998px;top:478px;width:400px;color:#000;letter-spacing:0.5px">Seq=2469042605  Ack=3727880060  Next Seq=2469042605</div>
<div class="t c" style="left:2px;top:502px;width:50px;letter-spacing:0.2px">18</div>
<div class="t c" style="left:52px;top:502px;width:79px;letter-spacing:0.15px">0.000993</div>
<div class="t c" style="left:130px;top:491px;width:76px;color:#8e8e8e;letter-spacing:0.15px">0.000002</div>
<div class="a" style="left:220px;top:508px;width:386px;height:1px;background:#000;"></div>
<svg style="left:214px;top:505px" width="7" height="7" viewBox="0 0 7 7"><path d="M6.8,0.4 L0.6,3.5 L6.8,6.6 Z" fill="#000"/></svg>
<div class="t c" style="left:209.10000000000002px;top:494px;width:400px;letter-spacing:-0.5px">ACK</div>
<div class="t c" style="left:211.89999999999998px;top:508px;width:400px;color:#000;letter-spacing:0.5px">Seq=2469042605  Ack=3727881056  Next Seq=2469042605</div>
<div class="t c" style="left:2px;top:532px;width:50px;letter-spacing:0.2px">19</div>
<div class="t c" style="left:52px;top:532px;width:79px;letter-spacing:0.15px">0.000995</div>
<div class="t c" style="left:130px;top:521px;width:76px;color:#8e8e8e;letter-spacing:0.15px">0.000002</div>
<div class="a" style="left:220px;top:538px;width:386px;height:1px;background:#000;"></div>
<svg style="left:214px;top:535px" width="7" height="7" viewBox="0 0 7 7"><path d="M6.8,0.4 L0.6,3.5 L6.8,6.6 Z" fill="#000"/></svg>
<div class="t c" style="left:209.10000000000002px;top:524px;width:400px;letter-spacing:-0.5px">ACK</div>
<div class="t c" style="left:211.89999999999998px;top:538px;width:400px;color:#000;letter-spacing:0.5px">Seq=2469042605  Ack=3727882052  Next Seq=2469042605</div>
<div class="t c" style="left:2px;top:562px;width:50px;letter-spacing:0.2px">20</div>
<div class="t c" style="left:52px;top:562px;width:79px;letter-spacing:0.15px">0.000997</div>
<div class="t c" style="left:130px;top:551px;width:76px;color:#8e8e8e;letter-spacing:0.15px">0.000002</div>
<div class="a" style="left:220px;top:568px;width:386px;height:1px;background:#000;"></div>
<svg style="left:214px;top:565px" width="7" height="7" viewBox="0 0 7 7"><path d="M6.8,0.4 L0.6,3.5 L6.8,6.6 Z" fill="#000"/></svg>
<div class="t c" style="left:209.10000000000002px;top:554px;width:400px;letter-spacing:-0.5px">ACK</div>
<div class="t c" style="left:211.89999999999998px;top:568px;width:400px;color:#000;letter-spacing:0.5px">Seq=2469042605  Ack=3727883048  Next Seq=2469042605</div>
<div class="t c" style="left:2px;top:592px;width:50px;letter-spacing:0.2px">21</div>
<div class="t c" style="left:52px;top:592px;width:79px;letter-spacing:0.15px">0.001119</div>
<div class="t c" style="left:130px;top:581px;width:76px;color:#8e8e8e;letter-spacing:0.15px">0.000122</div>
<div class="a" style="left:220px;top:598px;width:386px;height:1px;background:#000;"></div>
<svg style="left:214px;top:595px" width="7" height="7" viewBox="0 0 7 7"><path d="M6.8,0.4 L0.6,3.5 L6.8,6.6 Z" fill="#000"/></svg>
<div class="t c" style="left:209.10000000000002px;top:584px;width:400px;letter-spacing:-0.5px">ACK</div>
<div class="t c" style="left:211.89999999999998px;top:598px;width:400px;color:#000;letter-spacing:0.5px">Seq=2469042605  Ack=3727884044  Next Seq=2469042605</div>
<div class="t c" style="left:2px;top:622px;width:50px;letter-spacing:0.2px">22</div>
<div class="t c" style="left:52px;top:622px;width:79px;letter-spacing:0.15px">0.001122</div>
<div class="t c" style="left:130px;top:611px;width:76px;color:#8e8e8e;letter-spacing:0.15px">0.000003</div>
<div class="a" style="left:220px;top:628px;width:386px;height:1px;background:#000;"></div>
<svg style="left:214px;top:625px" width="7" height="7" viewBox="0 0 7 7"><path d="M6.8,0.4 L0.6,3.5 L6.8,6.6 Z" fill="#000"/></svg>
<div class="t c" style="left:209.10000000000002px;top:614px;width:400px;letter-spacing:-0.5px">ACK</div>
<div class="t c" style="left:211.89999999999998px;top:628px;width:400px;color:#000;letter-spacing:0.5px">Seq=2469042605  Ack=3727884265  Next Seq=2469042605</div>
<div class="t c" style="left:2px;top:652px;width:50px;letter-spacing:0.2px">23</div>
<div class="t c" style="left:52px;top:652px;width:79px;letter-spacing:0.15px">0.001124</div>
<div class="t c" style="left:130px;top:641px;width:76px;color:#8e8e8e;letter-spacing:0.15px">0.000002</div>
<div class="a" style="left:220px;top:658px;width:386px;height:1px;background:#f00;"></div>
<svg style="left:214px;top:655px" width="7" height="7" viewBox="0 0 7 7"><path d="M6.8,0.4 L0.6,3.5 L6.8,6.6 Z" fill="#f00"/></svg>
<div class="t c" style="left:208.89999999999998px;top:643px;width:400px;letter-spacing:-0.1px">ACK, RST<span style="position:relative;left:-4.5px;margin-left:-1px">（</span>重复<span style="position:relative;left:3.5px;margin-right:-1px">）</span></div>
<div class="t c" style="left:211.89999999999998px;top:658px;width:400px;color:#f00;letter-spacing:0.5px">Seq=2469042605  Ack=3727884265  Next Seq=2469042605</div>
<div class="a" style="left:731px;top:208px;width:17px;height:492px;background:linear-gradient(90deg,#e9e9e9,#f0f0f0 25%,#f0f0f0 75%,#ebebeb);"></div>
<div class="a" style="left:731px;top:209px;width:15px;height:16px;border:1px solid #a0a0a0;border-radius:2px;background:linear-gradient(90deg,#f6f6f6,#ececec 48%,#d6d6d6 52%,#dedede)"></div>
<svg style="left:735px;top:215px" width="8" height="5" viewBox="0 0 8 5"><path d="M0.2,4.6 L3.7,0.6 L7.2,4.6 Z" fill="#454545"/></svg>
<div class="a" style="left:731px;top:683px;width:15px;height:16px;border:1px solid #a0a0a0;border-radius:2px;background:linear-gradient(90deg,#f6f6f6,#ececec 48%,#d6d6d6 52%,#dedede)"></div>
<svg style="left:735px;top:689px" width="8" height="5" viewBox="0 0 8 5"><path d="M0.2,0.4 L3.7,4.4 L7.2,0.4 Z" fill="#454545"/></svg>
<div class="a" style="left:731px;top:346px;width:15px;height:184px;border:1px solid #3c7fb1;border-radius:2px;background:linear-gradient(90deg,#e4f4fd,#d3edfb 45%,#a9daf6 50%,#b6e0f8);box-shadow:inset 0 0 0 1px rgba(255,255,255,.7)"></div>
<div class="a" style="left:735px;top:435px;width:7px;height:1px;background:#2f6f9f;"></div>
<div class="a" style="left:735px;top:436px;width:7px;height:1px;background:#7fb8dc;opacity:.7"></div>
<div class="a" style="left:735px;top:438px;width:7px;height:1px;background:#2f6f9f;"></div>
<div class="a" style="left:735px;top:439px;width:7px;height:1px;background:#7fb8dc;opacity:.7"></div>
<div class="a" style="left:735px;top:441px;width:7px;height:1px;background:#2f6f9f;"></div>
<div class="a" style="left:735px;top:442px;width:7px;height:1px;background:#7fb8dc;opacity:.7"></div>
<div class="a" style="left:748px;top:180px;width:1px;height:522px;background:#f4f4f4;"></div>
<div class="a" style="left:749px;top:180px;width:1px;height:522px;background:#6d6d6d;"></div>
<div class="a" style="left:750px;top:180px;width:3px;height:522px;background:#f4f4f4;"></div>
<div class="a" style="left:753px;top:180px;width:1px;height:522px;background:#6d6d6d;"></div>
<div class="a" style="left:754px;top:180px;width:603px;height:150px;background:#fff;"></div>
<div class="a" style="left:754px;top:330px;width:603px;height:1px;background:#6d6d6d;"></div>
<div class="a" style="left:754px;top:331px;width:603px;height:3px;background:#f0f0f0;"></div>
<div class="a" style="left:754px;top:334px;width:603px;height:1px;background:#6d6d6d;"></div>
<div class="a" style="left:754px;top:335px;width:603px;height:367px;background:#fff;"></div>
<div class="a" style="left:754px;top:180px;width:586px;height:133px;overflow:hidden">
<div class="a" style="left:11px;top:16px;width:1px;height:140px;background:repeating-linear-gradient(180deg,#808080 0 1px,transparent 1px 2px)"></div>
<div class="a" style="left:30px;top:18px;width:1px;height:64px;background:repeating-linear-gradient(180deg,#808080 0 1px,transparent 1px 2px)"></div>
<div class="a" style="left:30px;top:108px;width:1px;height:40px;background:repeating-linear-gradient(180deg,#808080 0 1px,transparent 1px 2px)"></div>
<div class="a" style="left:17px;top:10px;width:6px;height:1px;background:repeating-linear-gradient(90deg,#808080 0 1px,transparent 1px 2px)"></div>
<div class="a" style="left:17px;top:100px;width:6px;height:1px;background:repeating-linear-gradient(90deg,#808080 0 1px,transparent 1px 2px)"></div>
<div class="a" style="left:32px;top:28px;width:9px;height:1px;background:repeating-linear-gradient(90deg,#808080 0 1px,transparent 1px 2px)"></div>
<div class="a" style="left:32px;top:46px;width:9px;height:1px;background:repeating-linear-gradient(90deg,#808080 0 1px,transparent 1px 2px)"></div>
<div class="a" style="left:32px;top:64px;width:9px;height:1px;background:repeating-linear-gradient(90deg,#808080 0 1px,transparent 1px 2px)"></div>
<div class="a" style="left:32px;top:82px;width:9px;height:1px;background:repeating-linear-gradient(90deg,#808080 0 1px,transparent 1px 2px)"></div>
<div class="a" style="left:32px;top:118px;width:9px;height:1px;background:repeating-linear-gradient(90deg,#808080 0 1px,transparent 1px 2px)"></div>
<div class="a" style="left:32px;top:136px;width:9px;height:1px;background:repeating-linear-gradient(90deg,#808080 0 1px,transparent 1px 2px)"></div>
<div class="a" style="left:7px;top:6px;width:9px;height:9px;border:1px solid #919191;border-radius:1px;background:linear-gradient(135deg,#fff,#ddd)"></div>
<div class="a" style="left:9px;top:10px;width:5px;height:1px;background:#2a3d7a"></div>
<div class="a" style="left:7px;top:96px;width:9px;height:9px;border:1px solid #919191;border-radius:1px;background:linear-gradient(135deg,#fff,#ddd)"></div>
<div class="a" style="left:9px;top:100px;width:5px;height:1px;background:#2a3d7a"></div>
<svg style="left:22px;top:2px" width="16" height="14" viewBox="0 0 16 14">
<rect x="0.5" y="0.5" width="14.5" height="2" fill="#fff" stroke="#1f3f9a" stroke-width="1"/>
<path d="M3.2,2.5 L5.4,5.4 M8.4,2.5 L6.2,5.4" fill="none" stroke="#1f3f9a" stroke-width="1.1"/>
<path d="M5.6,9 V12.4" stroke="#6a7fd0" stroke-width="1.2"/>
<rect x="3.3" y="5.3" width="4.6" height="3.9" rx="0.6" fill="#ffc21a" stroke="#b07c00" stroke-width="0.8"/>
<rect x="4.4" y="6.3" width="2.2" height="1.2" fill="#ffe88a"/>
</svg>
<svg style="left:22px;top:92px" width="16" height="14" viewBox="0 0 16 14">
<rect x="0.5" y="0.5" width="14.5" height="2" fill="#fff" stroke="#1f3f9a" stroke-width="1"/>
<path d="M3.2,2.5 L5.4,5.4 M8.4,2.5 L6.2,5.4" fill="none" stroke="#1f3f9a" stroke-width="1.1"/>
<path d="M5.6,9 V12.4" stroke="#6a7fd0" stroke-width="1.2"/>
<rect x="3.3" y="5.3" width="4.6" height="3.9" rx="0.6" fill="#ffc21a" stroke="#b07c00" stroke-width="0.8"/>
<rect x="4.4" y="6.3" width="2.2" height="1.2" fill="#ffe88a"/>
</svg>
<svg style="left:41px;top:20px" width="16" height="15" viewBox="0 0 16 15">
<rect x="0.5" y="0.5" width="13.5" height="13" fill="#dfe6ff" stroke="#5a6cc0" stroke-width="1"/>
<path d="M3,3.5 H12 M3,5.5 H12 M3,7.5 H12 M3,9.5 H7" stroke="#6d7fd6" stroke-width="0.9"/>
<rect x="7.5" y="8" width="7.5" height="6.5" rx="1" fill="#ffd83a" stroke="#a07c00" stroke-width="0.8"/>
<path d="M9.3,10.3 H13.2 M9.3,12.2 H13.2" stroke="#a07c00" stroke-width="0.8"/>
</svg>
<svg style="left:41px;top:39px" width="16" height="13" viewBox="0 0 16 13">
<rect x="7" y="0.5" width="8" height="6.5" rx="1.6" fill="#ffe05a" stroke="#8a6a00" stroke-width="0.9"/>
<path d="M9,2.8 H13.2 M9,4.7 H13.2" stroke="#8a6a00" stroke-width="0.7"/>
<rect x="0.6" y="4.5" width="8.4" height="7.5" rx="1.8" fill="#ffd83a" stroke="#8a6a00" stroke-width="0.9"/>
<path d="M2.5,7.2 H7 M2.5,9.4 H7" stroke="#8a6a00" stroke-width="0.8"/>
</svg>
<svg style="left:41px;top:57px" width="16" height="13" viewBox="0 0 16 13">
<rect x="7" y="0.5" width="8" height="6.5" rx="1.6" fill="#ffe05a" stroke="#8a6a00" stroke-width="0.9"/>
<path d="M9,2.8 H13.2 M9,4.7 H13.2" stroke="#8a6a00" stroke-width="0.7"/>
<rect x="0.6" y="4.5" width="8.4" height="7.5" rx="1.8" fill="#ffd83a" stroke="#8a6a00" stroke-width="0.9"/>
<path d="M2.5,7.2 H7 M2.5,9.4 H7" stroke="#8a6a00" stroke-width="0.8"/>
</svg>
<svg style="left:41px;top:74px" width="16" height="15" viewBox="0 0 16 15">
<rect x="0.5" y="0.5" width="13.5" height="13" fill="#dfe6ff" stroke="#5a6cc0" stroke-width="1"/>
<path d="M3,3.5 H12 M3,5.5 H12 M3,7.5 H12 M3,9.5 H7" stroke="#6d7fd6" stroke-width="0.9"/>
<rect x="7.5" y="8" width="7.5" height="6.5" rx="1" fill="#ffd83a" stroke="#a07c00" stroke-width="0.8"/>
<path d="M9.3,10.3 H13.2 M9.3,12.2 H13.2" stroke="#a07c00" stroke-width="0.8"/>
</svg>
<svg style="left:41px;top:111px" width="16" height="11" viewBox="0 0 16 11">
<path d="M0.5,0.5 H13 L15.5,3 V9 L13.5,10.5 H0.5 Z" fill="#1f9a1f" stroke="#0a5a0a" stroke-width="0.9"/>
<path d="M2,3 H6 M2,5.5 H6 M2,8 H6" stroke="#fff" stroke-width="1.1"/>
<rect x="7.5" y="2" width="2" height="3" fill="#ffe040"/><rect x="10.5" y="2" width="2" height="2.4" fill="#fff"/>
<rect x="8" y="6.5" width="1.6" height="2.6" fill="#fff"/><rect x="11" y="6" width="2" height="2.5" fill="#ffe040"/>
<rect x="1" y="1" width="1.4" height="1.4" fill="#e03030"/>
</svg>
<svg style="left:41px;top:129px" width="16" height="11" viewBox="0 0 16 11">
<path d="M0.5,0.5 H13 L15.5,3 V9 L13.5,10.5 H0.5 Z" fill="#1f9a1f" stroke="#0a5a0a" stroke-width="0.9"/>
<path d="M2,3 H6 M2,5.5 H6 M2,8 H6" stroke="#fff" stroke-width="1.1"/>
<rect x="7.5" y="2" width="2" height="3" fill="#ffe040"/><rect x="10.5" y="2" width="2" height="2.4" fill="#fff"/>
<rect x="8" y="6.5" width="1.6" height="2.6" fill="#fff"/><rect x="11" y="6" width="2" height="2.5" fill="#ffe040"/>
<rect x="1" y="1" width="1.4" height="1.4" fill="#e03030"/>
</svg>
<div class="t mono" style="left:41.5px;top:3px;font-weight:bold;color:#1a3a9a;"><span class="cjb">数据包信息</span>:</div>
<div class="a" style="left:41px;top:16px;width:82px;height:1px;background:#1a3a9a"></div>
<div class="t mono" style="left:61px;top:21px;color:#7f7f00"><span class="cj">编号</span>:</div>
<div class="t mono" style="left:61px;top:39px;color:#7f7f00"><span class="cj">数据包长度</span>:</div>
<div class="t mono" style="left:61px;top:57px;color:#7f7f00"><span class="cj">捕获长度</span>:</div>
<div class="t mono" style="left:61px;top:75px;color:#7f7f00"><span class="cj">时间戳</span>:</div>
<div class="t mono" style="left:41.5px;top:93px;font-weight:bold;color:#1a3a9a;"><span class="cjb">以太网</span> - II[Ethernet Type II]:</div>
<div class="a" style="left:41px;top:106px;width:213px;height:1px;background:#1a3a9a"></div>
<div class="t mono" style="left:61px;top:111px;color:#7f7f00"><span class="cj">目标地址</span>[Destination Address]:</div>
<div class="t mono" style="left:61px;top:129px;color:#7f7f00"><span class="cj">源地址</span>[Source Address]:</div>
<div class="t mono" style="left:512px;top:21px;">20,547</div>
<div class="t mono" style="left:512px;top:39px;">78</div>
<div class="t mono" style="left:512px;top:57px;">74</div>
<div class="t mono" style="left:512px;top:75px;">2009/07/29</div>
<div class="t mono" style="left:512px;top:93px;"><span style="color:#2e8b57">[</span><span style="color:#6a5acd">0</span><span style="color:#2e8b57">/</span><span style="color:#ff6347">14</span><span style="color:#2e8b57">]</span></div>
<div class="t mono" style="left:512px;top:111px;">00:13:32:0B:29:7E</div>
<div class="t mono" style="left:512px;top:129px;">00:50:56:B0:23:8D</div>
</div>
<div class="a" style="left:1341px;top:180px;width:16px;height:134px;background:linear-gradient(90deg,#e9e9e9,#f0f0f0 25%,#f0f0f0 75%,#ebebeb);"></div>
<svg style="left:1345px;top:187px" width="9" height="5" viewBox="0 0 9 5"><path d="M0.5,4.5 L4.5,0.5 L8.5,4.5 Z" fill="#4a4a4a"/></svg>
<svg style="left:1345px;top:302px" width="9" height="5" viewBox="0 0 9 5"><path d="M0.5,0.5 L4.5,4.5 L8.5,0.5 Z" fill="#4a4a4a"/></svg>
<div class="a" style="left:1341px;top:198px;width:15px;height:15px;border:1px solid #989898;border-radius:2px;background:linear-gradient(90deg,#f5f5f5,#e9e9e9 50%,#d4d4d4 51%,#dcdcdc)"></div>
<div class="a" style="left:1340px;top:314px;width:17px;height:16px;background:#f0f0f0;"></div>
<div class="a" style="left:754px;top:314px;width:586px;height:16px;background:linear-gradient(180deg,#e9e9e9,#f0f0f0 25%,#f0f0f0 75%,#ebebeb);"></div>
<svg style="left:760px;top:317px" width="5" height="9" viewBox="0 0 5 9"><path d="M4.5,0.5 L0.5,4.5 L4.5,8.5 Z" fill="#4a4a4a"/></svg>
<svg style="left:1330px;top:317px" width="5" height="9" viewBox="0 0 5 9"><path d="M0.5,0.5 L4.5,4.5 L0.5,8.5 Z" fill="#4a4a4a"/></svg>
<div class="a" style="left:772px;top:314px;width:253px;height:15px;border:1px solid #989898;border-radius:2px;background:linear-gradient(180deg,#f5f5f5,#e9e9e9 50%,#d4d4d4 51%,#dcdcdc)"></div>
<div class="a" style="left:895px;top:318px;width:1px;height:7px;background:#5a5a5a;"></div>
<div class="a" style="left:896px;top:318px;width:1px;height:7px;background:#fff;opacity:.6"></div>
<div class="a" style="left:898px;top:318px;width:1px;height:7px;background:#5a5a5a;"></div>
<div class="a" style="left:899px;top:318px;width:1px;height:7px;background:#fff;opacity:.6"></div>
<div class="a" style="left:901px;top:318px;width:1px;height:7px;background:#5a5a5a;"></div>
<div class="a" style="left:902px;top:318px;width:1px;height:7px;background:#fff;opacity:.6"></div>
<div class="a" style="left:795px;top:340px;width:1px;height:357px;background:#00008b;"></div>
<div class="a" style="left:1209px;top:340px;width:1px;height:357px;background:#00008b;"></div>
<div class="t hex" style="left:760px;top:341px;">0000</div>
<div class="t hex" style="left:802px;top:341px;">00 13 32 0B 29 7E 00 50 56 B0 23 8D 08 00 45 00 00 3C 5B</div>
<div class="t hex" style="left:1217px;top:341px;">..2.)~.PV.#...E..&lt;[</div>
<div class="t hex" style="left:760px;top:355px;">0013</div>
<div class="t hex" style="left:802px;top:355px;">A9 40 00 40 06 7E 2E AC 10 02 4E B7 3F FB 46 CB 0F 00 50</div>
<div class="t hex" style="left:1217px;top:355px;">.@.@.~....N.?.F...P</div>
<div class="t hex" style="left:760px;top:369px;">0026</div>
<div class="t hex" style="left:802px;top:369px;">DE 32 DE E7 00 00 00 00 A0 02 39 08 9B D7 00 00 02 04 05</div>
<div class="t hex" style="left:1217px;top:369px;">.2........9........</div>
<div class="t hex" style="left:760px;top:383px;">0039</div>
<div class="t hex" style="left:802px;top:383px;">B4 04 02 08 0A 04 73 85 4E 00 00 00 00 01 03 03 07</div>
<div class="t hex" style="left:1217px;top:383px;">......s.N........</div>
<div class="a" style="left:1346px;top:700px;width:11px;height:1px;background:#222;"></div>
</body></html>
